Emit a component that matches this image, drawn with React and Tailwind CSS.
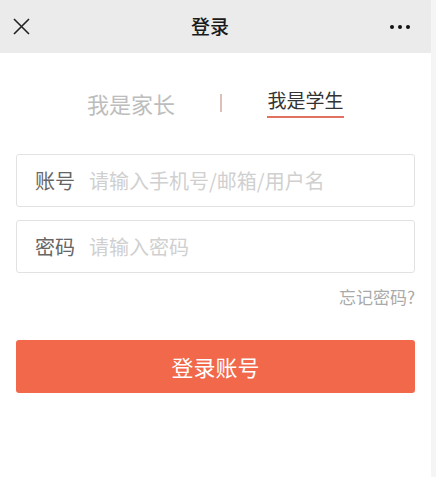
import React from 'react';

// Login page (student tab active)
const App = () => {
  const font = { fontFamily: '"Noto Sans CJK SC", "Noto Sans", sans-serif' };

  return (
    <div className="flex h-[477px] w-full bg-[#f5f5f5]" style={font}>
      <div className="flex w-[431px] flex-col bg-white">
        {/* top bar */}
        <div className="flex h-[53px] items-center justify-between bg-[#ebebeb] px-[13px]">
          <svg width="17" height="17" viewBox="0 0 17 17">
            <path d="M1 1 L16 16 M16 1 L1 16" stroke="#222" strokeWidth="1.6" fill="none" />
          </svg>
          <span className="text-[19px] font-medium text-[#1a1a1a]">登录</span>
          <div className="mr-[8px] flex gap-[4px]">
            <span className="h-[4px] w-[4px] rounded-full bg-[#111]" />
            <span className="h-[4px] w-[4px] rounded-full bg-[#111]" />
            <span className="h-[4px] w-[4px] rounded-full bg-[#111]" />
          </div>
        </div>

        {/* role tabs */}
        <div className="mt-[34px] flex items-center justify-center gap-[45px]">
          <span className="text-[22px] leading-[28px] text-[#bdbdbd]">我是家长</span>
          <span className="h-[18px] w-[2px] bg-[#dcc0ba]" />
          <div className="flex flex-col items-center">
            <span className="text-[19px] leading-[26px] text-[#333]">我是学生</span>
            <span className="mt-[3px] h-[2px] w-[77px] bg-[#e0725f]" />
          </div>
        </div>

        {/* form */}
        <div className="mt-[36px] flex flex-col px-[16px]">
          <div className="flex h-[53px] items-center rounded-[3px] border border-[#e2e2e2] pl-[18px]">
            <span className="text-[20px] text-[#666]">账号</span>
            <span className="ml-[14px] text-[20px] text-[#d0d0d0]">请输入手机号/邮箱/用户名</span>
          </div>
          <div className="mt-[13px] flex h-[53px] items-center rounded-[3px] border border-[#e2e2e2] pl-[18px]">
            <span className="text-[20px] text-[#666]">密码</span>
            <span className="ml-[14px] text-[20px] text-[#d0d0d0]">请输入密码</span>
          </div>
          <div className="mt-[12px] text-right text-[17px] leading-[24px] text-[#aaa]">忘记密码?</div>
          <button className="mt-[31px] flex h-[53px] items-center justify-center rounded-[3px] bg-[#f2684b] text-[22px] text-white">
            登录账号
          </button>
        </div>
      </div>
    </div>
  );
};

export default App;
